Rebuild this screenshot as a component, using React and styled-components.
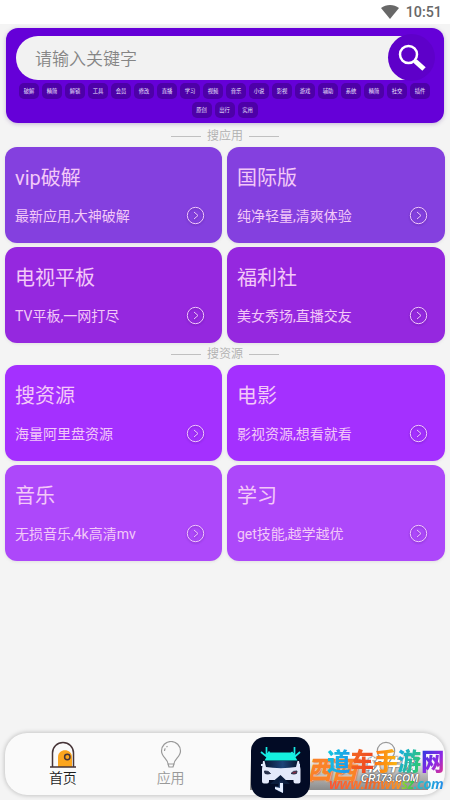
import React from "react";
import styled, { createGlobalStyle } from "styled-components";

const Global = createGlobalStyle`
  * { box-sizing: border-box; }
  body { margin: 0; background: #f4f4f4; font-family: Roboto, "Noto Sans CJK SC", sans-serif; overflow: hidden; }
`;
const Screen = styled.div`
  width: 450px; height: 800px; display: flex; flex-direction: column; position: relative; overflow: hidden;
`;
const StatusBar = styled.header`
  height: 24px; flex: none; background: #fff; display: flex; align-items: center; justify-content: flex-end;
  gap: 7px; padding-right: 8px; color: #686868; font-size: 14.3px; font-weight: 500; line-height: 24px;
  svg { margin-right: 0; }
`;
const SearchPanel = styled.section`
  height: 95px; flex: none; margin: 4px 6px 0; border-radius: 12px; background: #6500d8; padding: 8px 9px 0 10px;
  box-shadow: 0 1px 4px #7b5aa666;
`;
const SearchField = styled.div`
  height: 44px; margin-right: 22px; border-radius: 22px 0 0 22px; background: #f2f2f2; display: flex; align-items: center;
  justify-content: space-between; padding: 0 0 1px 19px; color: #858585; font-size: 17px; font-weight: 350;
`;
const SearchButton = styled.div`
  width: 47px; height: 47px; margin-right: -22px; border-radius: 50%; background: #5e00c9; flex: none;
  display: flex; align-items: center; justify-content: center;
`;
const Tags = styled.div`
  display: flex; flex-wrap: wrap; justify-content: center; gap: 3px; margin: 3px 2px 0 0;
`;
const Tag = styled.span`
  width: 20px; height: 16px; border-radius: 5px; background: #4d00a8; color: #ece2ff;
  font-size: 5.3px; line-height: 16px; text-align: center; white-space: nowrap;
`;
const SectionTitle = styled.h2`
  margin: 0; height: ${(p) => p.$h}px; flex: none; display: flex; align-items: center; justify-content: center; gap: 6px;
  font-size: 12px; line-height: 18px; padding-top: ${(p) => p.$h - 22}px; padding-bottom: 1px; font-weight: 350; color: #b0b0b0;
  &::before, &::after { content: ""; width: 30px; height: 1px; margin-top: 2px; background: #c0c0c0; }
`;
const Grid = styled.div`
  display: grid; grid-template-columns: 217px 218px; grid-auto-rows: 96px; gap: 4px 5px; padding-left: 5px; flex: none;
`;
const Card = styled.article`
  border-radius: 12px; background: ${(p) => p.$bg}; color: #f3c8f8; padding: 16px 17px 0 10px;
  box-shadow: 0 1px 3px #8888882e; font-weight: 400;
`;
const CardTitle = styled.div`
  font-size: 20px; line-height: 30px; height: 30px;
`;
const CardFoot = styled.div`
  display: flex; justify-content: space-between; align-items: center; margin-top: 13px; height: 20px;
  font-size: 14px; line-height: 20px; white-space: nowrap;
  svg { filter: drop-shadow(0 1px 1px #30006066); margin-top: -1px; }
`;
const NavBar = styled.nav`
  margin: auto 5px 5px; height: 62px; flex: none; border-radius: 22px; background: #fafafa; box-shadow: 0 0 5px #0004;
  display: grid; grid-template-columns: repeat(4, 1fr); padding: 8px 5px 0 4px;
`;
const NavItem = styled.div`
  display: flex; flex-direction: column; align-items: center; color: ${(p) => (p.$active ? "#1d1d1d" : "#999")};
  font-size: 14px; line-height: 18px; font-weight: 350;
  svg { flex: none; }
`;
const Watermark = styled.div`
  position: absolute; left: 250px; top: 758px; width: 178px; height: 32px;
  background: linear-gradient(#99999900 0%, #aaaaaab8 45%, #777777d9 100%);
`;
const OrangeMark = styled.span`
  position: absolute; left: 57px; top: -5px; font-size: 25px; line-height: 36px; font-weight: 900;
  font-style: italic; color: #fa8229; text-shadow: 0 0 2px #fff, 1px 1px 1px #b96830; white-space: nowrap;
`;
const GrayMark = styled.span`
  position: absolute; left: 115px; top: -5px; font-size: 17px; line-height: 24px; font-weight: 900; font-style: italic;
  color: #fff; text-shadow: 0 0 2px #444, 0 0 1px #444; white-space: nowrap;
`;
const DomainMark = styled.span`
  position: absolute; left: 111px; top: 14px; font: italic 700 10px/13px "Liberation Sans", sans-serif;
  color: #fff; text-shadow: 0 0 2px #333, 0 0 1px #333; white-space: nowrap;
`;
const AppBadge = styled.div`
  position: absolute; left: 251px; top: 737px; width: 59px; height: 61px;
  svg { display: block; }
`;
const SiteName = styled.div`
  position: absolute; left: 327px; top: 746px; font-size: 23.5px; line-height: 32px; font-weight: 900; white-space: nowrap;
`;
const SiteUrl = styled.div`
  position: absolute; left: 329px; top: 774px; font: italic 700 14px/20px "Open Sans", sans-serif;
  letter-spacing: -.45px; white-space: nowrap;
`;
const Ink = styled.span`
  color: transparent; background: ${(p) => p.$fill}; background-clip: text;
`;

const tags = "破解 精简 解锁 工具 会员 修改 直播 学习 视频 音乐 小说 影视 游戏 辅助 系统 精简 社交 插件 原创 出行 实用".split(" ");
const apps = [
  ["vip破解", "最新应用,大神破解", "#8440df"],
  ["国际版", "纯净轻量,清爽体验", "#8440df"],
  ["电视平板", "TV平板,一网打尽", "#9528df"],
  ["福利社", "美女秀场,直播交友", "#9528df"],
];
const resources = [
  ["搜资源", "海量阿里盘资源", "#a430ff"],
  ["电影", "影视资源,想看就看", "#a430ff"],
  ["音乐", "无损音乐,4k高清mv", "#ad48fa"],
  ["学习", "get技能,越学越优", "#ad48fa"],
];

const Arrow = () => (
  <svg width="19" height="19" viewBox="0 0 19 19" fill="none" stroke="#f0c6fb">
    <circle cx="9.5" cy="9.5" r="8.2" /><path d="m8 6 4 3.5L8 13" />
  </svg>
);
const CardGrid = ({ items }) => (
  <Grid>
    {items.map(([title, note, bg]) => (
      <Card key={title} $bg={bg}>
        <CardTitle>{title}</CardTitle>
        <CardFoot>{note}<Arrow /></CardFoot>
      </Card>
    ))}
  </Grid>
);
const Door = () => (
  <svg width="26" height="28" viewBox="0 0 26 28" fill="none" stroke="#463437" strokeWidth="1.5">
    <path d="M8 26V16c0-9 14-9 14 0v10Z" fill="#fba51e" stroke="none" />
    <path d="M2.500 26V12a10.500 10.500 0 0 1 21 0v14M0 26h26" /><circle cx="17.300" cy="16" r="2.700" strokeWidth="1.500" />
  </svg>
);
const Bulb = () => (
  <svg width="24" height="28" viewBox="0 0 24 28" fill="none" stroke="#999" strokeWidth="1.2">
    <path d="M9 23c0-5-6.500-7-6.500-13a9.500 9.500 0 0 1 19 0c0 6-6.500 8-6.500 13Zm0 0 1 3h4l1-3M5.500 10c0-1 .3-2 .8-2.700M7.500 6l1-.8" />
  </svg>
);
const Person = () => (
  <svg width="26" height="28" viewBox="0 0 26 28" fill="none" stroke="#999" strokeWidth="1.2">
    <circle cx="13" cy="10" r="8.700" />
  </svg>
);
const CarLogo = () => (
  <svg width="59" height="61" viewBox="0 0 59 61">
    <defs>
      <linearGradient id="glass"><stop stopColor="#061532" /><stop offset=".55" stopColor="#1d4478" /><stop offset="1" stopColor="#07152f" /></linearGradient>
      <linearGradient id="road" x2="0" y2="1"><stop stopColor="#0a1c40" /><stop offset="1" stopColor="#4f6f9c" /></linearGradient>
    </defs>
    <rect width="59" height="61" rx="14" fill="#020b25" />
    <path d="M18 15.500h23.500l5 8H13.500Z" fill="#14f0df" />
    <path d="M13 24h34v10H13Z" fill="url(#glass)" />
    <path d="M12 24h1.500l1.500 6q6 1 15 1.200 9-.2 15-1.200l1.500-6H48l1.500 8v12.500q0 2-2 2h-3q-2 0-2-2V43H18v1.500q0 2-2 2h-3q-2 0-2-2V32Z" fill="#e3e9fa" />
    <path d="M13.500 34q4-.5 6 2.500-3 1-5.500 0Z" fill="#29324d" stroke="#29324d" />
    <path d="M46 34q-4-.5-6 2.500 3 1 5.500 0Z" fill="#842d45" stroke="#29324d" />
    <path d="M29.500 38 39 47h-6v8h-6v-8h-8Z" fill="#0b1d3d" />
    <path d="M28 43h4v13l-8-4v-3l4 1Z" fill="url(#road)" />
    <path d="M29 46h3v10l-8-4v-2l5 1Z" fill="#e4edff" />
    <g fill="none" stroke="#18e9e3" strokeWidth="1.700"><path d="M15.500 10v9M10 15l5.500 4.500 3-5M43.500 10v9M40.500 15l3.500 4.500 5-4.500" /></g>
    <path d="M10 28h2M47 28h2" stroke="#ddeaff" strokeWidth="2" />
  </svg>
);

const siteName = [
  ["道", "linear-gradient(110deg, #10c9dc, #238fef)"],
  ["车", "linear-gradient(110deg, #f36b21, #ee3d23)"],
  ["手", "linear-gradient(90deg, #ff7614, #f8b913)"],
  ["游", "linear-gradient(110deg, #15a9ea, #35cd5d)"],
  ["网", "linear-gradient(130deg, #223ee0, #8d28e5 55%, #ed357b)"],
];
const siteUrl = [
  ["www.", "linear-gradient(90deg, #ff512e, #ff7826)"],
  ["lmww", "linear-gradient(90deg, #ef5b2b, #ff951f)"],
  ["sz", "linear-gradient(90deg, #a5d42a, #28c955)"],
  [".com", "linear-gradient(90deg, #20c9c9, #238de8)"],
];

export default function App() {
  return (
    <Screen>
      <Global />
      <StatusBar>
        <svg width="18" height="14" viewBox="0 0 18 14"><path d="M0 3C5-1 13-1 18 3L9 14Z" fill="#686868" /></svg>
        <span>10:51</span>
      </StatusBar>
      <SearchPanel>
        <SearchField>
          请输入关键字
          <SearchButton>
            <svg width="28" height="28" viewBox="0 0 28 28" fill="none" stroke="#fff">
              <circle cx="10.500" cy="10.500" r="8.500" strokeWidth="2.500" /><path d="m17 17 9 8" strokeWidth="5" />
            </svg>
          </SearchButton>
        </SearchField>
        <Tags>{tags.map((t, i) => <Tag key={i}>{t}</Tag>)}</Tags>
      </SearchPanel>
      <SectionTitle $h={24}>搜应用</SectionTitle>
      <CardGrid items={apps} />
      <SectionTitle $h={22}>搜资源</SectionTitle>
      <CardGrid items={resources} />
      <NavBar>
        <NavItem $active><Door />首页</NavItem>
        <NavItem><Bulb />应用</NavItem>
        <NavItem />
        <NavItem><Person /></NavItem>
      </NavBar>
      <Watermark>
        <OrangeMark>西西</OrangeMark>
        <GrayMark>软件园</GrayMark>
        <DomainMark>CR173.COM</DomainMark>
      </Watermark>
      <AppBadge><CarLogo /></AppBadge>
      <SiteUrl>{siteUrl.map(([t, f]) => <Ink key={t} $fill={f}>{t}</Ink>)}</SiteUrl>
      <SiteName>{siteName.map(([t, f]) => <Ink key={t} $fill={f}>{t}</Ink>)}</SiteName>
    </Screen>
  );
}
